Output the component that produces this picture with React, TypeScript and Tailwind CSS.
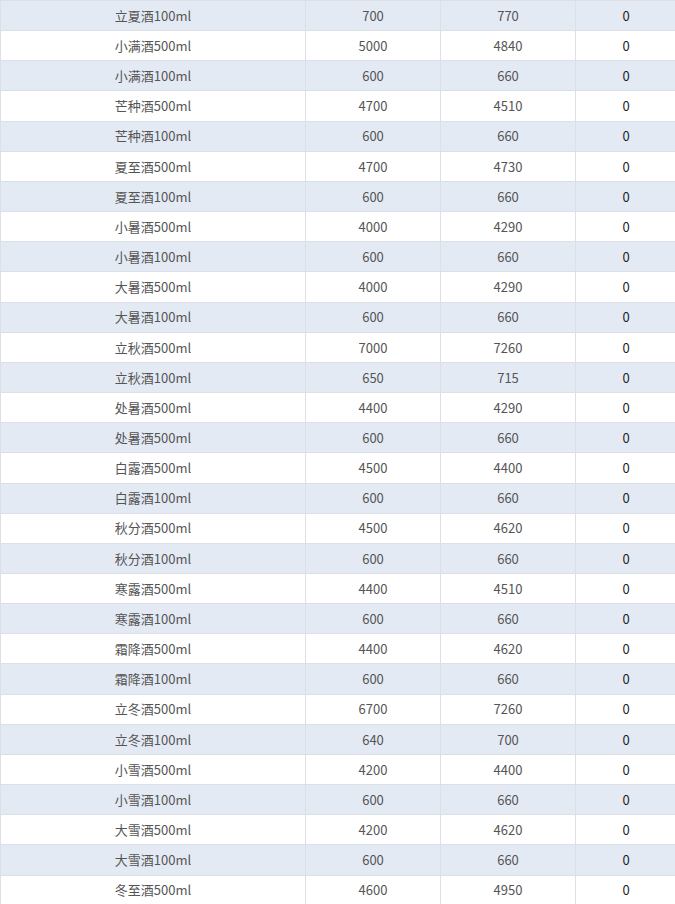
const rows: [string, number, number, number][] = [
  ['立夏酒100ml', 700, 770, 0],
  ['小满酒500ml', 5000, 4840, 0],
  ['小满酒100ml', 600, 660, 0],
  ['芒种酒500ml', 4700, 4510, 0],
  ['芒种酒100ml', 600, 660, 0],
  ['夏至酒500ml', 4700, 4730, 0],
  ['夏至酒100ml', 600, 660, 0],
  ['小暑酒500ml', 4000, 4290, 0],
  ['小暑酒100ml', 600, 660, 0],
  ['大暑酒500ml', 4000, 4290, 0],
  ['大暑酒100ml', 600, 660, 0],
  ['立秋酒500ml', 7000, 7260, 0],
  ['立秋酒100ml', 650, 715, 0],
  ['处暑酒500ml', 4400, 4290, 0],
  ['处暑酒500ml', 600, 660, 0],
  ['白露酒500ml', 4500, 4400, 0],
  ['白露酒100ml', 600, 660, 0],
  ['秋分酒500ml', 4500, 4620, 0],
  ['秋分酒100ml', 600, 660, 0],
  ['寒露酒500ml', 4400, 4510, 0],
  ['寒露酒100ml', 600, 660, 0],
  ['霜降酒500ml', 4400, 4620, 0],
  ['霜降酒100ml', 600, 660, 0],
  ['立冬酒500ml', 6700, 7260, 0],
  ['立冬酒100ml', 640, 700, 0],
  ['小雪酒500ml', 4200, 4400, 0],
  ['小雪酒100ml', 600, 660, 0],
  ['大雪酒500ml', 4200, 4620, 0],
  ['大雪酒100ml', 600, 660, 0],
  ['冬至酒500ml', 4600, 4950, 0],
];

// 价格表（截取部分）
export default function App() {
  return (
    <div
      className="w-[675px] overflow-hidden bg-white text-[13px] text-[#555] border-t border-l border-[#dcdfe6]"
      style={{ fontFamily: '"Noto Sans CJK SC", "Noto Sans", sans-serif' }}
    >
      {rows.map(([name, a, b, c], i) => (
        <div
          key={i}
          className={`grid grid-cols-[305px_135px_135px_100px] h-[30.17px] border-b border-[#dcdfe6] ${i % 2 === 0 ? 'bg-[#e4eaf4]' : 'bg-white'}`}
        >
          <div className="flex items-center justify-center border-r border-[#dcdfe6]">{name}</div>
          <div className="flex items-center justify-center border-r border-[#dcdfe6]">{a}</div>
          <div className="flex items-center justify-center border-r border-[#dcdfe6]">{b}</div>
          <div className="flex items-center justify-center text-[#1f1f1f]">{c}</div>
        </div>
      ))}
    </div>
  );
}
